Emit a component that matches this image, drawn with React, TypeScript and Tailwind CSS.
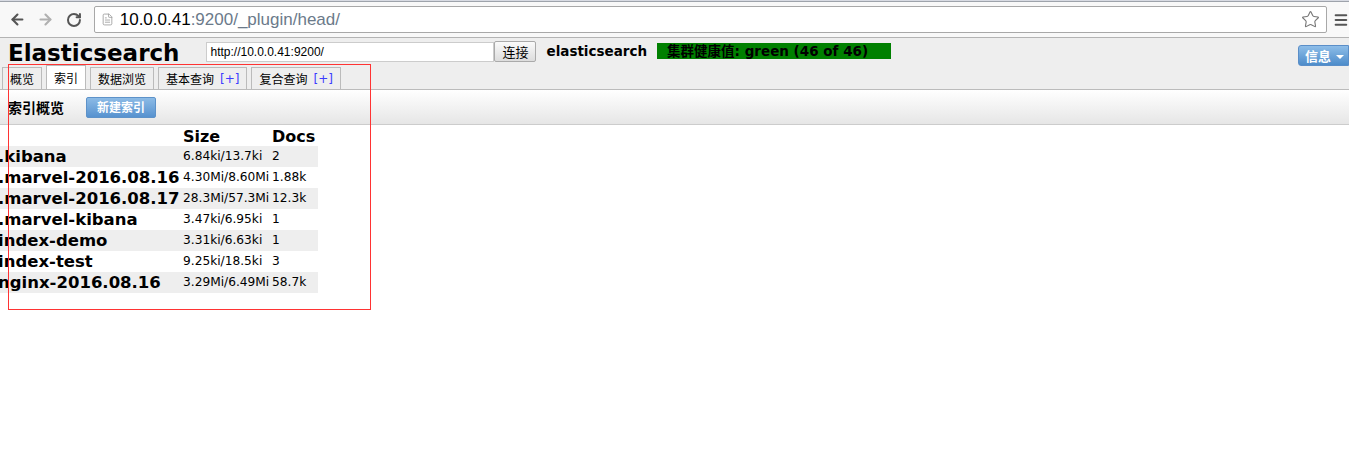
import { ArrowLeft, ArrowRight, RotateCw, Star, FileText, Menu } from "lucide-react";

const indices = [
  { name: ".kibana", size: "6.84ki/13.7ki", docs: "2" },
  { name: ".marvel-2016.08.16", size: "4.30Mi/8.60Mi", docs: "1.88k" },
  { name: ".marvel-2016.08.17", size: "28.3Mi/57.3Mi", docs: "12.3k" },
  { name: ".marvel-kibana", size: "3.47ki/6.95ki", docs: "1" },
  { name: "index-demo", size: "3.31ki/6.63ki", docs: "1" },
  { name: "index-test", size: "9.25ki/18.5ki", docs: "3" },
  { name: "nginx-2016.08.16", size: "3.29Mi/6.49Mi", docs: "58.7k" },
];

const verdana = "font-['DejaVu_Sans','Noto_Sans_CJK_SC',sans-serif]";
const cjk = "font-['Noto_Sans_CJK_SC',sans-serif]";

function Tab({ label, plus, active }: { label: string; plus?: boolean; active?: boolean }) {
  return (
    <div
      className={
        "flex items-center border border-b-0 px-[7px] text-[12px] leading-none text-black " +
        cjk +
        (active ? " h-[24px] border-[#bbb] bg-white" : " h-[22px] border-[#bbb] bg-[#eee]")
      }
    >
      {label}
      {plus && <span className={"ml-[6px] text-[#3b3bff] " + verdana}>[+]</span>}
    </div>
  );
}

export default function App() {
  return (
    <div className="relative min-h-[472px] bg-white">
      {/* browser chrome */}
      <div className="h-[2px] border-b border-[#9ea3ab] bg-[#d8dbe3]" />
      <div className="flex h-[36px] items-center border-b border-[#b3b3b3] bg-[#f8f8f8]">
        <ArrowLeft className="ml-[9px] h-[17px] w-[17px] text-[#555]" strokeWidth={3} />
        <ArrowRight className="ml-[11px] h-[17px] w-[17px] text-[#b0b0b0]" strokeWidth={3} />
        <RotateCw className="ml-[12px] h-[16px] w-[16px] text-[#555]" strokeWidth={3} />
        <div className="ml-[12px] flex h-[27px] w-[1240px] items-center rounded-[2px] border border-[#a8a8a8] bg-white">
          <FileText className="ml-[6px] h-[15px] w-[13px] text-[#999]" strokeWidth={1.5} />
          <span className="ml-[6px] font-['Liberation_Sans',sans-serif] text-[17px] leading-none text-black">
            10.0.0.41<span className="text-[#6b7a8a]">:9200/_plugin/head/</span>
          </span>
          <Star className="ml-auto mr-[6px] h-[19px] w-[19px] text-[#777]" strokeWidth={1.4} />
        </div>
        <Menu className="ml-[6px] h-[16px] w-[16px] text-[#555]" strokeWidth={3} />
      </div>

      {/* page header */}
      <div className="bg-[#eee]">
        <div className="flex h-[28px] items-start">
          <h1 className={"ml-[8px] mt-[1px] text-[23px] font-bold leading-[28px] text-black " + verdana}>
            Elasticsearch
          </h1>
          <input
            readOnly
            value="http://10.0.0.41:9200/"
            className="ml-[27px] mt-[4px] h-[20px] w-[288px] border border-[#ccc] bg-white px-[3px] font-['Liberation_Sans',sans-serif] text-[12px] text-black outline-none"
          />
          <button className={"mt-[3px] h-[21px] w-[42px] rounded-[2px] border border-[#aaa] bg-linear-to-b from-[#fafafa] to-[#ddd] text-[13px] text-black " + cjk}>
            连接
          </button>
          <span className={"ml-[10px] mt-[5px] text-[13.5px] font-bold leading-[17px] text-black " + verdana}>
            elasticsearch
          </span>
          <span className={"ml-[10px] mt-[5px] h-[16px] w-[234px] bg-[#008000] pl-[10px] text-[13.5px] font-bold leading-[16px] text-black " + verdana}>
            集群健康值: green (46 of 46)
          </span>
          <button className={"ml-auto mt-[7px] flex h-[21px] w-[51px] items-center rounded-l-[3px] border border-[#5a8ec8] bg-linear-to-b from-[#8dbde8] to-[#4d8cca] pl-[6px] text-[13px] font-bold text-white " + cjk}>
            信息
            <span className="ml-[5px] mt-[2px] h-0 w-0 border-x-[4px] border-t-[4px] border-x-transparent border-t-white" />
          </button>
        </div>
        <div className="flex h-[24px] items-end gap-[4px] border-b border-[#bbb] pl-[2px]">
          <Tab label="概览" />
          <Tab label="索引" active />
          <Tab label="数据浏览" />
          <Tab label="基本查询" plus />
          <Tab label="复合查询" plus />
        </div>
      </div>

      {/* toolbar section */}
      <div className="flex h-[35px] items-center border-b border-[#ccc] bg-linear-to-b from-white to-[#e6e6e6]">
        <span className={"ml-[8px] text-[14px] font-bold text-black " + cjk}>索引概览</span>
        <button className={"ml-[22px] h-[21px] w-[70px] rounded-[2px] border border-[#5d92c9] bg-linear-to-b from-[#8cbbe6] to-[#5792cf] text-[12px] font-bold text-white " + cjk}>
          新建索引
        </button>
      </div>

      {/* index table */}
      <table className={"ml-[-2px] mt-[2px] border-collapse text-black " + verdana}>
        <thead>
          <tr className="h-[19px]">
            <th className="w-[185px]" />
            <th className="w-[89px] text-left align-bottom text-[16px] font-bold leading-[18px]">Size</th>
            <th className="w-[46px] text-left align-bottom text-[16px] font-bold leading-[18px]">Docs</th>
          </tr>
        </thead>
        <tbody>
          {indices.map((idx, i) => (
            <tr key={idx.name} className={"h-[21px] " + (i % 2 === 0 ? "bg-[#eee]" : "bg-white")}>
              <td className="whitespace-nowrap p-0 text-[16.5px] font-bold leading-[21px]">{idx.name}</td>
              <td className="whitespace-nowrap p-0 text-[12.2px] leading-[21px]">{idx.size}</td>
              <td className="whitespace-nowrap p-0 text-[12.2px] leading-[21px]">{idx.docs}</td>
            </tr>
          ))}
        </tbody>
      </table>

      {/* red annotation frame */}
      <div className="pointer-events-none absolute left-[8px] top-[64px] h-[246px] w-[363px] border border-[#f33]" />
    </div>
  );
}
